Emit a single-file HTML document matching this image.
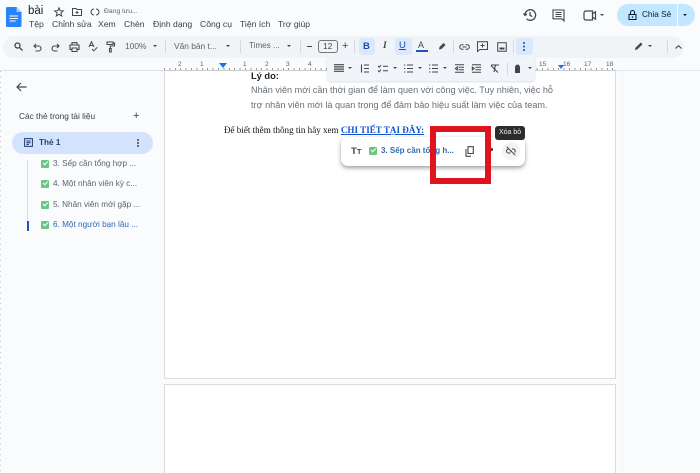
<!DOCTYPE html>
<html lang="vi"><head><meta charset="utf-8"><style>
html,body{margin:0;padding:0;background:#f9fbfd}
#w{width:700px;height:473px;overflow:hidden;background:#f9fbfd;position:relative;font-family:"Liberation Sans",sans-serif;color:#444746;filter:blur(.3px)}
.t{position:absolute;white-space:nowrap;line-height:1}
.b{position:absolute}
svg{position:absolute;overflow:visible;fill:none;stroke:#444746;stroke-width:1.3}
.m{font-size:8.6px;top:20px;color:#3c4043}
.s{font-size:8.4px;color:#5f6368}
.tab{font-size:8.2px;color:#5f6368;left:53px}
.ck{position:absolute;width:8px;height:8px;background:#6cc485;border-radius:1px}
.ck:after{content:"";position:absolute;left:1.5px;top:1.2px;width:4px;height:2px;border-left:1.2px solid #fff;border-bottom:1.2px solid #fff;transform:rotate(-45deg)}
.tri{position:absolute;width:0;height:0;border-left:2.5px solid transparent;border-right:2.5px solid transparent;border-top:2.5px solid #444746}
.sep{position:absolute;width:1px;height:13px;background:#d5d9dd}
.r{position:absolute;font-size:6.5px;color:#5f6368;top:62px;line-height:1}
</style></head><body><div id="w">

<!-- docs logo -->
<svg style="left:6px;top:7px" width="16" height="20" viewBox="0 0 16 20"><path d="M1.5 0H10.500L15.500 5V18.500Q15.500 20 14 20H1.500Q0 20 0 18.500V1.500Q0 0 1.500 0Z" fill="#2684fc" stroke="none"/><path d="M10.500 0V5H15.500Z" fill="#a8c7fa" stroke="none"/><path d="M3.500 9H12M3.500 11.500H12M3.500 14H9.500" stroke="#fff" stroke-width="1"/></svg>

<div class="t" style="left:28px;top:6px;font-size:11.500px;color:#202124">bài</div>
<svg style="left:54px;top:7px" width="10" height="10" viewBox="0 0 10 10" stroke-width="1"><path d="M5 .8 6.200 3.700 9.300 3.900 6.900 5.900 7.700 9 5 7.300 2.300 9 3.100 5.900.7 3.900 3.800 3.700Z" stroke-width="1"/></svg>
<svg style="left:72px;top:8px" width="10" height="8" viewBox="0 0 10 8"><path d="M.5 7.500V.5H4L5 1.500H9.500V7.500ZM5 3V6M3.500 4.500H6.500" stroke-width="1"/></svg>
<svg style="left:91px;top:8px" width="8" height="8" viewBox="0 0 8 8"><path d="M3 1A3 3 0 0 0 3 7M5 1A3 3 0 0 1 5 7" stroke-width="1"/></svg>
<div class="t" style="left:104px;top:9px;font-size:6.800px;color:#5f6368">Đang lưu...</div>

<div class="t m" style="left:29px">Tệp</div>
<div class="t m" style="left:52px">Chỉnh sửa</div>
<div class="t m" style="left:98px">Xem</div>
<div class="t m" style="left:124px">Chèn</div>
<div class="t m" style="left:153px">Định dạng</div>
<div class="t m" style="left:200px">Công cụ</div>
<div class="t m" style="left:240px">Tiện ích</div>
<div class="t m" style="left:278px">Trợ giúp</div>

<!-- top right -->
<svg style="left:523px;top:8px" width="14" height="14" viewBox="0 0 14 14"><path d="M2 7A5.300 5.300 0 1 1 3.600 10.800M.5 5.500 2 7.500 4 6M7 4V7.300L9.300 8.600" stroke-width="1.300"/></svg>
<svg style="left:552px;top:9px" width="13" height="13" viewBox="0 0 13 13"><path d="M1 1H12V12L10 9.800H1ZM3.500 3.500H9.500M3.500 5.500H9.500M3.500 7.500H9.500" stroke-width="1.100"/></svg>
<svg style="left:583px;top:10px" width="14" height="11" viewBox="0 0 14 11"><path d="M3 1H9.500V10H3Q1 10 1 8V3Q1 1 3 1ZM9.500 4 12.500 1.800V9.200L9.500 7Z" stroke-width="1.200"/></svg>
<div class="tri" style="left:600px;top:14px"></div>
<div class="b" style="left:617px;top:4px;width:78px;height:22px;border-radius:11px;background:#c2e7ff"></div>
<div class="b" style="left:677px;top:4px;width:1px;height:22px;background:#f9fbfd"></div>
<svg style="left:628px;top:10px" width="9" height="10" viewBox="0 0 9 10"><path d="M1 4.500H8V9.500H1ZM2.500 4.500V2.500A2 2 0 0 1 6.500 2.500V4.500" stroke="#001d35" stroke-width="1"/><circle cx="4.500" cy="7" r=".8" fill="#001d35" stroke="none"/></svg>
<div class="t" style="left:642px;top:11px;font-size:8.200px;color:#001d35">Chia Sẻ</div>
<div class="tri" style="left:683px;top:14px;border-top-color:#001d35"></div>

<!-- toolbar -->
<div class="b" style="left:3px;top:36px;width:681px;height:22px;border-radius:11px;background:#f0f4f9"></div>
<svg style="left:14px;top:42px" width="9" height="9" viewBox="0 0 9 9"><circle cx="3.500" cy="3.500" r="2.500"/><path d="M5.500 5.500 8.500 8.500"/></svg>
<svg style="left:33px;top:43px" width="9" height="9" viewBox="0 0 9 9"><path d="M3 1 1 3 3 5M1 3H5.500A2.500 2.500 0 0 1 5.500 8H2.500" stroke-width="1.100"/></svg>
<svg style="left:51px;top:43px" width="9" height="9" viewBox="0 0 9 9"><path d="M6 1 8 3 6 5M8 3H3.500A2.500 2.500 0 0 0 3.500 8H6.500" stroke-width="1.100"/></svg>
<svg style="left:69px;top:42px" width="11" height="10" viewBox="0 0 11 10"><path d="M3 3V.7H8V3M3 7.500H1V3H10V7.500H8M3 6H8V9.500H3Z" stroke-width="1.100"/></svg>
<svg style="left:88px;top:41px" width="10" height="11" viewBox="0 0 10 11"><path d="M1 6 3.500 .8 6 6M1.800 4.500H5.200M4 8 5.800 9.800 9.300 6.300" stroke-width="1"/></svg>
<svg style="left:106px;top:41px" width="9" height="12" viewBox="0 0 9 12"><path d="M1 1H7V3.500H1ZM7 2H8.500V5H4.300V7.500M3.500 7.500H5.200V11H3.500Z" stroke-width="1.100"/></svg>
<div class="t s" style="left:125px;top:42px;font-size:8.400px">100%</div>
<div class="tri" style="left:153px;top:45px"></div>
<div class="sep" style="left:165px;top:40px"></div>
<div class="t s" style="left:174px;top:42px">Văn bản t...</div>
<div class="tri" style="left:226px;top:45px"></div>
<div class="sep" style="left:240px;top:40px"></div>
<div class="t s" style="left:249px;top:42px;font-size:8.100px">Times ...</div>
<div class="tri" style="left:287px;top:45px"></div>
<div class="sep" style="left:300px;top:40px"></div>
<div class="b" style="left:307px;top:46px;width:5px;height:1px;background:#444746"></div>
<div class="b" style="left:318px;top:40px;width:20px;height:13px;border:1px solid #747775;border-radius:3px;box-sizing:border-box"></div>
<div class="t" style="left:323px;top:42px;font-size:8.400px;color:#444746">12</div>
<div class="t" style="left:342px;top:41px;font-size:11px;color:#444746">+</div>
<div class="sep" style="left:354px;top:40px"></div>

<div class="b" style="left:359px;top:38px;width:16px;height:17px;border-radius:3px;background:#dbe7fa"></div>
<div class="t" style="left:363px;top:42px;font-size:9.500px;font-weight:bold;color:#174ea6">B</div>
<div class="t" style="left:383px;top:42px;font-size:9.500px;font-style:italic;font-family:'Liberation Serif',serif;font-weight:bold;color:#444746">I</div>
<div class="b" style="left:395px;top:38px;width:17px;height:17px;border-radius:3px;background:#dbe7fa"></div>
<div class="t" style="left:399px;top:41px;font-size:9.500px;color:#174ea6;text-decoration:underline">U</div>
<div class="t" style="left:418px;top:41px;font-size:9px;color:#444746">A</div>
<div class="b" style="left:416px;top:50px;width:12px;height:2px;background:#1a56b8"></div>
<svg style="left:437px;top:42px" width="10" height="9" viewBox="0 0 10 9"><path d="M2.500 5 6.500 1 8.500 3 4.500 7 2 7.500Z" fill="#444746" stroke="none"/></svg>
<div class="sep" style="left:453px;top:40px"></div>
<svg style="left:459px;top:44px" width="11" height="6" viewBox="0 0 11 6"><path d="M4.500 .7H3A2.300 2.300 0 0 0 3 5.300H4.500M6.500 .7H8A2.300 2.300 0 0 1 8 5.300H6.500M3.500 3H7.500" stroke-width="1"/></svg>
<svg style="left:477px;top:41px" width="11" height="11" viewBox="0 0 11 11"><path d="M.5 .7H10.500V8.500H3L.5 10.500ZM5.500 2.500V6.500M3.500 4.500H7.500" stroke-width="1"/></svg>
<svg style="left:497px;top:42px" width="10" height="10" viewBox="0 0 10 10"><path d="M.7 .7H9.300V9.300H.7Z" stroke-width="1"/><path d="M2.500 5.500H7.500V7.500H2.500Z" fill="#444746" stroke="none"/></svg>
<div class="sep" style="left:513px;top:40px"></div>
<div class="b" style="left:516px;top:38px;width:17px;height:17px;border-radius:3px;background:#dbe7fa"></div>
<div class="b" style="left:523px;top:42px;width:2px;height:2px;background:#174ea6;border-radius:50%;box-shadow:0 3.500px 0 #174ea6,0 7px 0 #174ea6"></div>
<svg style="left:634px;top:41px" width="10" height="10" viewBox="0 0 10 10"><path d="M1 9 1.500 6.800 6.800 1.500 8.500 3.200 3.200 8.500Z" fill="#444746" stroke="none"/></svg>
<div class="tri" style="left:648px;top:45px"></div>
<div class="sep" style="left:667px;top:40px"></div>
<svg style="left:675px;top:45px" width="7" height="4" viewBox="0 0 7 4"><path d="M.5 3.500 3.500 .7 6.500 3.500" stroke-width="1.100"/></svg>

<!-- ruler -->
<div class="b" style="left:0;top:70px;width:164px;height:1px;background:#dfe3e7"></div>
<div class="b" style="left:616px;top:70px;width:84px;height:1px;background:#e4e7ea"></div>
<div class="b" style="left:622px;top:71px;width:1px;height:402px;background:#f4f6f8"></div>
<div class="b" style="left:0;top:71px;width:1px;height:402px;background:repeating-linear-gradient(to bottom,#c4c7ca 0,#c4c7ca 1px,transparent 1px,transparent 5.400px)"></div>
<div class="b" style="left:164px;top:68px;width:452px;height:2px;background:repeating-linear-gradient(to right,#9a9a9a 0,#9a9a9a 1px,transparent 1px,transparent 5.400px)"></div>
<div class="b" style="left:164px;top:70px;width:452px;height:1px;background:#c9ccd0"></div>
<div class="r" style="left:178px">2</div><div class="r" style="left:200px">1</div>
<div class="r" style="left:243px">1</div><div class="r" style="left:265px">2</div><div class="r" style="left:286px">3</div><div class="r" style="left:308px">4</div>
<div class="r" style="left:539px">15</div><div class="r" style="left:563px">16</div><div class="r" style="left:584px">17</div><div class="r" style="left:606px">18</div>
<div class="b" style="left:219px;top:63px;width:0;height:0;border-left:4px solid transparent;border-right:4px solid transparent;border-top:5px solid #1a73e8"></div>
<div class="b" style="left:558px;top:65px;width:0;height:0;border-left:3px solid transparent;border-right:3px solid transparent;border-top:4px solid #1a73e8"></div>

<!-- pages -->
<div class="b" style="left:164px;top:71px;width:452px;height:308px;background:#fff;border:1px solid #dadce0;border-top:none;box-sizing:border-box"></div>
<div class="b" style="left:164px;top:384px;width:452px;height:95px;background:#fff;border:1px solid #dadce0;box-sizing:border-box"></div>

<div class="t" style="left:251px;top:72px;font-size:9.300px;font-weight:bold;color:#222">Lý do:</div>
<div class="t" style="left:251px;top:86px;font-size:9.130px;color:#666f78">Nhân viên mới cần thời gian để làm quen với công việc. Tuy nhiên, việc hỗ</div>
<div class="t" style="left:251px;top:101px;font-size:9.130px;color:#666f78">trợ nhân viên mới là quan trọng để đảm bảo hiệu suất làm việc của team.</div>
<div class="t" style="left:224px;top:126px;font-size:9.050px;font-family:'Liberation Serif',serif;color:#111">Để biết thêm thông tin hãy xem <span style="color:#1155cc;font-weight:bold;text-decoration:underline;font-size:9.100px">CHI TIẾT TẠI ĐÂY:</span></div>

<!-- second floating toolbar -->
<div class="b" style="left:327px;top:57px;width:208px;height:24px;background:#f1f4f9;border-radius:0 0 4px 4px;box-shadow:0 1px 2px rgba(60,64,67,.18)"></div>
<svg style="left:334px;top:64px" width="10" height="9" viewBox="0 0 10 9"><path d="M0 .7H10M0 2.900H10M0 5.100H10M0 7.300H10" stroke-width="1.200"/></svg>
<div class="tri" style="left:348px;top:67px"></div>
<svg style="left:360px;top:64px" width="9" height="9" viewBox="0 0 9 9"><path d="M1.500 .5V8.500M4 1H9M4 4.500H9M4 8H9" stroke-width="1.100"/></svg>
<svg style="left:378px;top:64px" width="10" height="9" viewBox="0 0 10 9"><path d="M0 2 1.300 3.300 3 1M0 6.500 1.300 7.800 3 5.500M5 2.200H10M5 6.700H10" stroke-width="1"/></svg>
<div class="tri" style="left:393px;top:67px"></div>
<svg style="left:404px;top:64px" width="9" height="9" viewBox="0 0 9 9"><path d="M0 1H1.300M0 4.500H1.300M0 8H1.300M3 1H9M3 4.500H9M3 8H9" stroke-width="1"/></svg>
<div class="tri" style="left:418px;top:67px"></div>
<svg style="left:429px;top:64px" width="9" height="9" viewBox="0 0 9 9"><path d="M0 1H1.300M0 4.500H1.300M0 8H1.300M3 1H9M3 4.500H9M3 8H9" stroke-width="1"/></svg>
<div class="tri" style="left:443px;top:67px"></div>
<svg style="left:455px;top:64px" width="9" height="9" viewBox="0 0 9 9"><path d="M0 .7H9M3.500 3.300H9M3.500 5.700H9M0 8.300H9M2.300 3 .3 4.500 2.300 6Z" stroke-width="1"/></svg>
<svg style="left:472px;top:64px" width="9" height="9" viewBox="0 0 9 9"><path d="M0 .7H9M3.500 3.300H9M3.500 5.700H9M0 8.300H9M.3 3 2.300 4.500 .3 6Z" stroke-width="1"/></svg>
<svg style="left:490px;top:64px" width="10" height="9" viewBox="0 0 10 9"><path d="M1 1H9M5.500 1 4 8M1 1.500 8 8.500" stroke-width="1.100"/></svg>
<div class="sep" style="left:507px;top:62px"></div>
<svg style="left:514px;top:64px" width="7" height="10" viewBox="0 0 7 10"><path d="M1 3.500A2.500 3 0 0 1 6 3.500V9H1Z" fill="#444746" stroke="none"/></svg>
<div class="tri" style="left:528px;top:67px"></div>

<!-- sidebar -->
<svg style="left:16px;top:82px" width="11" height="10" viewBox="0 0 11 10"><path d="M10.500 5H1M5 1 1 5 5 9" stroke-width="1.200"/></svg>
<div class="t" style="left:19px;top:112px;font-size:8.300px;color:#3c4043">Các thẻ trong tài liệu</div>
<div class="t" style="left:133px;top:111px;font-size:11px;color:#3c4043">+</div>
<div class="b" style="left:12px;top:132px;width:141px;height:22px;border-radius:11px;background:#d3e3fd"></div>
<svg style="left:24px;top:138px" width="9" height="9" viewBox="0 0 9 9"><path d="M.6 .6H8.400V8.400H.6ZM2.300 3H6.700M2.300 4.700H6.700M2.300 6.400H5" stroke="#1f3a6e" stroke-width="1"/></svg>
<div class="t" style="left:39px;top:139px;font-size:8.200px;font-weight:bold;color:#2c4468">Thẻ 1</div>
<div class="b" style="left:137px;top:139px;width:2px;height:2px;border-radius:50%;background:#444746;box-shadow:0 3px 0 #444746,0 6px 0 #444746"></div>
<div class="b" style="left:27px;top:160px;width:1px;height:70px;background:#dadce0"></div>
<div class="b" style="left:27px;top:221px;width:1.500px;height:10px;background:#1a56b8"></div>
<div class="ck" style="left:41px;top:160px"></div><div class="t tab" style="top:160px">3. Sếp cần tổng hợp ...</div>
<div class="ck" style="left:41px;top:180px"></div><div class="t tab" style="top:180px">4. Một nhân viên kỳ c...</div>
<div class="ck" style="left:41px;top:201px"></div><div class="t tab" style="top:201px">5. Nhân viên mới gặp ...</div>
<div class="ck" style="left:41px;top:221px"></div><div class="t tab" style="top:221px;color:#2f6bb5">6. Một người bạn lâu ...</div>

<!-- link popup -->
<div class="b" style="left:341px;top:137px;width:184px;height:29px;border-radius:7px;background:#fff;box-shadow:0 2px 4px rgba(60,64,67,.5)"></div>
<div class="t" style="left:351px;top:147px;font-size:9.500px;font-weight:bold;color:#444746">T<span style="font-size:7.500px">T</span></div>
<div class="ck" style="left:369px;top:147px"></div>
<div class="t" style="left:381px;top:147px;font-size:8px;font-weight:bold;color:#2f6bb5;z-index:1">3. Sếp cần tổng h...</div>
<svg style="left:465px;top:146px" width="9" height="11" viewBox="0 0 9 11"><path d="M3 .7H8.300V7.500H3ZM1 3V10.300H6" stroke-width="1.100"/></svg>
<div class="b" style="left:490px;top:148px;width:3px;height:3px;background:#333;border-radius:50%"></div>
<div class="b" style="left:502px;top:142px;width:18px;height:18px;border-radius:50%;background:#f1f3f4"></div>
<svg style="left:506px;top:146px" width="10" height="10" viewBox="0 0 10 10"><path d="M.7 .7 9.300 9.300M3 3H2.500A2 2 0 0 0 2.500 7H4.500M6 3H7.500A2 2 0 0 1 8.500 6.500M4 5H6" stroke-width="1"/></svg>
<div class="b" style="left:495px;top:126px;width:30px;height:14px;border-radius:3px;background:#2c2c2c"></div>
<div class="t" style="left:499px;top:129px;font-size:7px;color:#eee">Xóa bỏ</div>

<!-- red annotation -->
<div class="b" style="left:430px;top:126px;width:61px;height:58px;border:6px solid #e0141e;box-sizing:border-box;z-index:3"></div>
</div></body></html>
